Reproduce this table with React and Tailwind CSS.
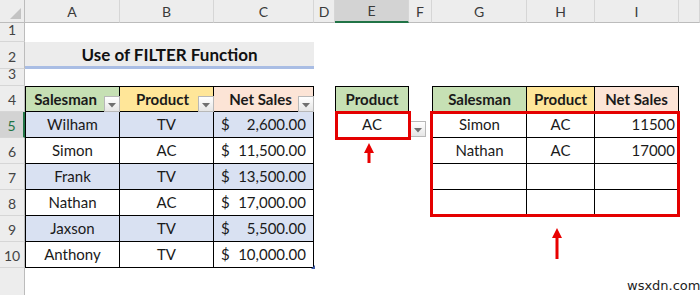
const rows = [
  { name: 'Wilham', product: 'TV', amount: '2,600.00' },
  { name: 'Simon', product: 'AC', amount: '11,500.00' },
  { name: 'Frank', product: 'TV', amount: '13,500.00' },
  { name: 'Nathan', product: 'AC', amount: '17,000.00' },
  { name: 'Jaxson', product: 'TV', amount: '5,500.00' },
  { name: 'Anthony', product: 'TV', amount: '10,000.00' },
];

const rowStart = ['row-start-6', 'row-start-7', 'row-start-8', 'row-start-9', 'row-start-10', 'row-start-11'];
const rowHeaderStart = ['row-start-2', 'row-start-3', 'row-start-4', 'row-start-5', 'row-start-6', 'row-start-7', 'row-start-8', 'row-start-9', 'row-start-10', 'row-start-11'];

const letters = [
  { l: 'A', c: 'col-start-2' },
  { l: 'B', c: 'col-start-3' },
  { l: 'C', c: 'col-start-4' },
  { l: 'D', c: 'col-start-5' },
  { l: 'E', c: 'col-start-6' },
  { l: 'F', c: 'col-start-7' },
  { l: 'G', c: 'col-start-8' },
  { l: 'H', c: 'col-start-9' },
  { l: 'I', c: 'col-start-10' },
  { l: '', c: 'col-start-11' },
];

function Dropdown({ className }) {
  return (
    <div className={`absolute flex h-[16px] w-[16px] items-center justify-center border border-[#b8b8b8] bg-gradient-to-b from-white to-[#e6e6e6] ${className}`}>
      <svg width="8" height="5" viewBox="0 0 8 5" className="mt-[2px]">
        <path d="M0 0 L8 0 L4 4.5 Z" fill="#707070" />
      </svg>
    </div>
  );
}

function Arrow({ className, height }) {
  return (
    <svg width="10" height={height} viewBox={`0 0 10 ${height}`} className={`absolute ${className}`}>
      <path d="M5 0 L10 10 L6.5 10 L6.5 100 L3.5 100 L3.5 10 L0 10 Z" fill="#e80000" />
    </svg>
  );
}

export default function App() {
  const cell = 'flex items-center border-b border-r border-black text-[15px] text-[#1a1a1a]';
  return (
    <div className="relative h-[295px] w-[700px] overflow-hidden bg-white font-['Lato','Liberation_Sans',sans-serif]">
      <div className="grid h-full grid-cols-[25px_95px_94px_100px_21px_74px_23px_95px_68px_84px_1fr] grid-rows-[23px_19px_27px_17px_26px_26px_26px_26px_26px_26px_26px_1fr]">
        {/* corner */}
        <div className="col-start-1 row-start-1 flex items-end justify-end border-b border-r border-[#bcbcbc] bg-[#ededed] p-[3px]">
          <svg width="11" height="11" viewBox="0 0 11 11">
            <path d="M11 0 L11 11 L0 11 Z" fill="#c3c3c3" />
          </svg>
        </div>
        {/* column headers */}
        {letters.map((h) => (
          <div
            key={h.c}
            className={`${h.c} row-start-1 flex items-center justify-center border-r border-[#d6d6d6] text-[14px] text-[#3a3a3a] ${
              h.l === 'E' ? 'border-b-2 border-b-[#217346] bg-[#d3d3d3]' : 'border-b border-b-[#bcbcbc] bg-[#ededed]'
            }`}
          >
            {h.l}
          </div>
        ))}
        {/* row headers */}
        {rowHeaderStart.map((r, i) => (
          <div
            key={r}
            className={`col-start-1 ${r} flex items-end justify-center pb-[1px] border-b border-[#d6d6d6] text-[14px] ${
              i === 4 ? 'border-r-2 border-r-[#217346] bg-[#d3d3d3] text-[#217346]' : 'border-r border-r-[#bcbcbc] bg-[#ededed] text-[#444]'
            }`}
          >
            {i + 1}
          </div>
        ))}
        <div className="col-start-1 row-start-12 border-r border-[#bcbcbc] bg-[#ededed]" />

        {/* title */}
        <div className="col-start-2 col-span-3 row-start-3 flex items-center justify-center border-b-[3px] border-[#a9bde4] bg-[#ececec] pt-[2px] text-[17px] font-bold text-[#111]">
          Use of FILTER Function
        </div>

        {/* left table header */}
        <div className={`${cell} col-start-2 row-start-5 border-l border-t justify-center bg-[#c6e0b4] pr-[14px] font-bold`}>Salesman</div>
        <div className={`${cell} col-start-3 row-start-5 border-t justify-center bg-[#ffe699] pr-[8px] font-bold`}>Product</div>
        <div className={`${cell} col-start-4 row-start-5 border-t justify-center bg-[#fce4d6] pr-[6px] font-bold`}>Net Sales</div>

        {rows.map((r, i) => {
          const bg = i % 2 === 0 ? 'bg-[#d9e1f2]' : 'bg-white';
          return [
            <div key={`a${i}`} className={`${cell} col-start-2 ${rowStart[i]} border-l justify-center ${bg}`}>{r.name}</div>,
            <div key={`b${i}`} className={`${cell} col-start-3 ${rowStart[i]} justify-center ${bg}`}>{r.product}</div>,
            <div key={`c${i}`} className={`${cell} col-start-4 ${rowStart[i]} justify-between px-[7px] ${bg}`}>
              <span>$</span>
              <span>{r.amount}</span>
            </div>,
          ];
        })}

        {/* criteria */}
        <div className={`${cell} col-start-6 row-start-5 border-l border-t justify-center bg-[#c6e0b4] font-bold`}>Product</div>
        <div className={`${cell} col-start-6 row-start-6 border-l justify-center`}>AC</div>

        {/* result table */}
        <div className={`${cell} col-start-8 row-start-5 border-l border-t justify-center bg-[#c6e0b4] font-bold`}>Salesman</div>
        <div className={`${cell} col-start-9 row-start-5 border-t justify-center bg-[#ffe699] font-bold`}>Product</div>
        <div className={`${cell} col-start-10 row-start-5 border-t justify-center bg-[#fce4d6] font-bold`}>Net Sales</div>

        <div className={`${cell} col-start-8 row-start-6 border-l justify-center`}>Simon</div>
        <div className={`${cell} col-start-9 row-start-6 justify-center`}>AC</div>
        <div className={`${cell} col-start-10 row-start-6 justify-end pr-[3px]`}>11500</div>
        <div className={`${cell} col-start-8 row-start-7 border-l justify-center`}>Nathan</div>
        <div className={`${cell} col-start-9 row-start-7 justify-center`}>AC</div>
        <div className={`${cell} col-start-10 row-start-7 justify-end pr-[3px]`}>17000</div>
        <div className={`${cell} col-start-8 row-start-8 border-l`} />
        <div className={`${cell} col-start-9 row-start-8`} />
        <div className={`${cell} col-start-10 row-start-8`} />
        <div className={`${cell} col-start-8 row-start-9 border-l`} />
        <div className={`${cell} col-start-9 row-start-9`} />
        <div className={`${cell} col-start-10 row-start-9`} />
      </div>

      {/* filter buttons */}
      <Dropdown className="left-[104px] top-[96px]" />
      <Dropdown className="left-[198px] top-[96px]" />
      <Dropdown className="left-[298px] top-[96px]" />
      <Dropdown className="left-[410px] top-[121px]" />

      {/* table resize handle */}
      <svg width="4" height="4" viewBox="0 0 4 4" className="absolute left-[311px] top-[265px]">
        <path d="M4 0 L4 4 L0 4 Z" fill="#3b5aa8" />
      </svg>

      {/* red highlights */}
      <div className="absolute left-[335px] top-[111px] h-[29px] w-[76px] border-[3px] border-[#e40000]" />
      <div className="absolute left-[430px] top-[111px] h-[106px] w-[250px] border-[3px] border-[#e40000]" />
      <Arrow className="left-[364px] top-[143px]" height={20} />
      <Arrow className="left-[552px] top-[228px]" height={31} />

      <div className="absolute left-[627px] top-[276px] font-['DejaVu_Sans',sans-serif] text-[13px] text-[#222]">wsxdn.com</div>
    </div>
  );
}
